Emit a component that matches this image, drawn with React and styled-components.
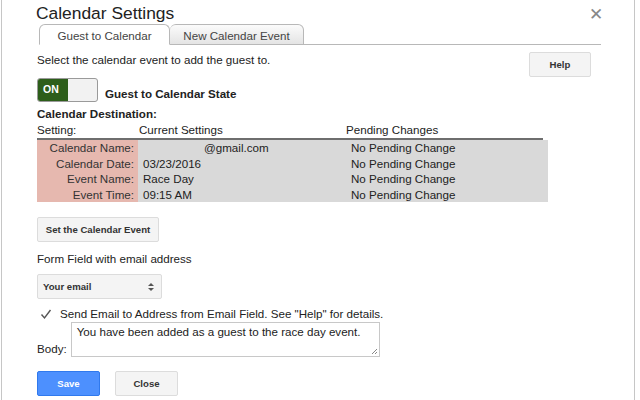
import React from "react";
import styled, { createGlobalStyle } from "styled-components";

const Global = createGlobalStyle`
  html, body { margin: 0; padding: 0; background: #fff; }
  body { font-family: "Liberation Sans", Arial, sans-serif; font-size: 11.6px; color: #222; }
`;

const Frame = styled.div`
  margin-left: 1px;
  width: 634px;
  height: 400px;
  border-left: 1px solid #c6c6c6;
  border-right: 1px solid #c6c6c6;
  box-sizing: border-box;
  padding: 2px 0 0 34px;
  overflow: hidden;
`;

const TitleBar = styled.div`
  display: flex;
  justify-content: space-between;
  align-items: center;
  width: 568px;
  height: 22px;
`;

const Title = styled.div`
  font-size: 17.4px;
  color: #222;
  line-height: 20px;
  margin-top: -1px;
`;

const CloseX = styled.span`
  font-size: 17px;
  color: #888;
  line-height: 18px;
  margin-top: 4px;
  margin-right: 1px;
`;

const TabBar = styled.div`
  display: flex;
  align-items: flex-end;
  margin-left: 3px;
  width: 562px;
  height: 21px;
`;

const Tab = styled.div`
  box-sizing: border-box;
  width: ${(p) => p.$w}px;
  height: 21px;
  display: flex;
  align-items: center;
  justify-content: center;
  font-size: 11.6px;
  color: #444;
  border: 1px solid #b8b8b8;
  border-radius: 6px 6px 0 0;
  padding-top: 1px;
  ${(p) =>
    p.$active
      ? `background: #fff; border-bottom-color: #fff;`
      : `background: linear-gradient(#fbfbfb, #e4e4e4); border-left: none;`}
`;

const TabFill = styled.div`
  flex: 1;
  border-bottom: 1px solid #b8b8b8;
`;

const Content = styled.div`
  width: 554px;
  margin-left: 1px;
  display: flex;
  flex-direction: column;
`;

const IntroRow = styled.div`
  display: flex;
  justify-content: space-between;
  align-items: flex-start;
  margin-top: 7px;
  line-height: 16px;
`;

const Btn = styled.button`
  box-sizing: border-box;
  font-family: "Liberation Sans", Arial, sans-serif;
  font-weight: bold;
  font-size: 9.6px;
  height: ${(p) => p.$h || 25}px;
  width: ${(p) => p.$w}px;
  background: ${(p) => (p.$primary ? "#4d90fe" : "#f4f4f4")};
  color: ${(p) => (p.$primary ? "#fff" : "#333")};
  border: 1px solid ${(p) => (p.$primary ? "#3079ed" : "#dcdcdc")};
  border-radius: 2px;
  padding: 0;
  cursor: pointer;
`;

const ToggleRow = styled.div`
  display: flex;
  align-items: flex-end;
  gap: 7px;
  margin-top: 1px;
`;

const Toggle = styled.div`
  box-sizing: border-box;
  width: 61px;
  height: 24px;
  border: 1px solid #9a9a9a;
  border-radius: 3px;
  display: flex;
  overflow: hidden;
  background: #f2f2f2;
`;

const ToggleOn = styled.div`
  width: 30px;
  background: #2d5e1a;
  color: #fff;
  font-weight: bold;
  font-size: 10.5px;
  display: flex;
  align-items: center;
  padding-left: 5px;
  box-sizing: border-box;
  padding-bottom: 2px;
`;

const Bold = styled.div`
  font-weight: bold;
  line-height: 16px;
  margin-top: ${(p) => p.$mt || 0}px;
`;

const Table = styled.div`
  display: grid;
  grid-template-columns: 101px 208px 202px;
  width: 511px;
`;

const Head = styled.div`
  line-height: 16px;
  padding-left: ${(p) => p.$pl || 0}px;
  border-bottom: 2px solid #6e6e6e;
  padding-bottom: 0px;
  ${(p) => p.$last && `margin-right: 5px;`}
`;

const LabelCell = styled.div`
  background: #e6b8af;
  text-align: right;
  padding-right: 4px;
  line-height: 15.5px;
  color: #333;
`;

const ValueCell = styled.div`
  background: #d9d9d9;
  line-height: 15.5px;
  padding-left: ${(p) => p.$pl}px;
  color: #222;
`;

const Plain = styled.div`
  line-height: 16px;
  margin-top: ${(p) => p.$mt || 0}px;
`;

const Select = styled.div`
  box-sizing: border-box;
  width: 125px;
  height: 25px;
  margin-top: 7px;
  border: 1px solid #dcdcdc;
  border-radius: 2px;
  background: #f4f4f4;
  display: flex;
  align-items: center;
  justify-content: space-between;
  padding: 0 6px 0 5px;
  font-weight: bold;
  font-size: 9.6px;
  color: #333;
`;

const CheckRow = styled.div`
  display: flex;
  align-items: center;
  gap: 8px;
  margin-top: 7px;
  padding-left: 3px;
  line-height: 16px;
`;

const BodyRow = styled.div`
  display: flex;
  align-items: flex-end;
  gap: 4px;
  margin-top: 0px;
`;

const TextArea = styled.div`
  position: relative;
  box-sizing: border-box;
  width: 309px;
  height: 35px;
  border: 1px solid #c8c8c8;
  padding: 1px 5px;
  line-height: 16px;
  color: #222;
`;

const Grip = styled.svg`
  position: absolute;
  right: 1px;
  bottom: 1px;
`;

const Actions = styled.div`
  display: flex;
  gap: 15px;
  margin-top: 14px;
`;

const ButtonWrap = styled.div`
  margin-top: 15px;
`;

export default function App() {
  const rows = [
    ["Calendar Name:", "@gmail.com", 66],
    ["Calendar Date:", "03/23/2016", 5],
    ["Event Name:", "Race Day", 5],
    ["Event Time:", "09:15 AM", 5],
  ];
  return (
    <Frame>
      <Global />
      <TitleBar>
        <Title>Calendar Settings</Title>
        <CloseX>✕</CloseX>
      </TitleBar>
      <TabBar>
        <Tab $active $w={131}>Guest to Calendar</Tab>
        <Tab $w={134}>New Calendar Event</Tab>
        <TabFill />
      </TabBar>
      <Content>
        <IntroRow>
          <span>Select the calendar event to add the guest to.</span>
          <Btn $w={62}>Help</Btn>
        </IntroRow>
        <ToggleRow>
          <Toggle>
            <ToggleOn>ON</ToggleOn>
          </Toggle>
          <Bold>Guest to Calendar State</Bold>
        </ToggleRow>
        <Bold $mt={4}>Calendar Destination:</Bold>
        <Table>
          <Head>Setting:</Head>
          <Head $pl={1}>Current Settings</Head>
          <Head $last>Pending Changes</Head>
          {rows.map(([l, v, pl]) => (
            <React.Fragment key={l}>
              <LabelCell>{l}</LabelCell>
              <ValueCell $pl={pl}>{v}</ValueCell>
              <ValueCell $pl={5}>No Pending Change</ValueCell>
            </React.Fragment>
          ))}
        </Table>
        <ButtonWrap>
          <Btn $w={122} $h={25}>Set the Calendar Event</Btn>
        </ButtonWrap>
        <Plain $mt={9}>Form Field with email address</Plain>
        <Select>
          <span>Your email</span>
          <svg width="8" height="12" viewBox="0 0 8 12">
            <path d="M1 5 L4 2 L7 5 Z" fill="#555" />
            <path d="M1 7 L4 10 L7 7 Z" fill="#555" />
          </svg>
        </Select>
        <CheckRow>
          <svg width="12" height="11" viewBox="0 0 12 11">
            <path d="M1.5 5.5 L4.5 9 L10.5 1" fill="none" stroke="#555" strokeWidth="1.4" />
          </svg>
          <span>Send Email to Address from Email Field. See "Help" for details.</span>
        </CheckRow>
        <BodyRow>
          <span style={{ lineHeight: "16px" }}>Body:</span>
          <TextArea>
            You have been added as a guest to the race day event.
            <Grip width="7" height="7" viewBox="0 0 7 7">
              <path d="M6 1 L1 6 M6 4 L4 6" stroke="#888" strokeWidth="1" />
            </Grip>
          </TextArea>
        </BodyRow>
        <Actions>
          <Btn $primary $w={63}>Save</Btn>
          <Btn $w={63}>Close</Btn>
        </Actions>
      </Content>
    </Frame>
  );
}
